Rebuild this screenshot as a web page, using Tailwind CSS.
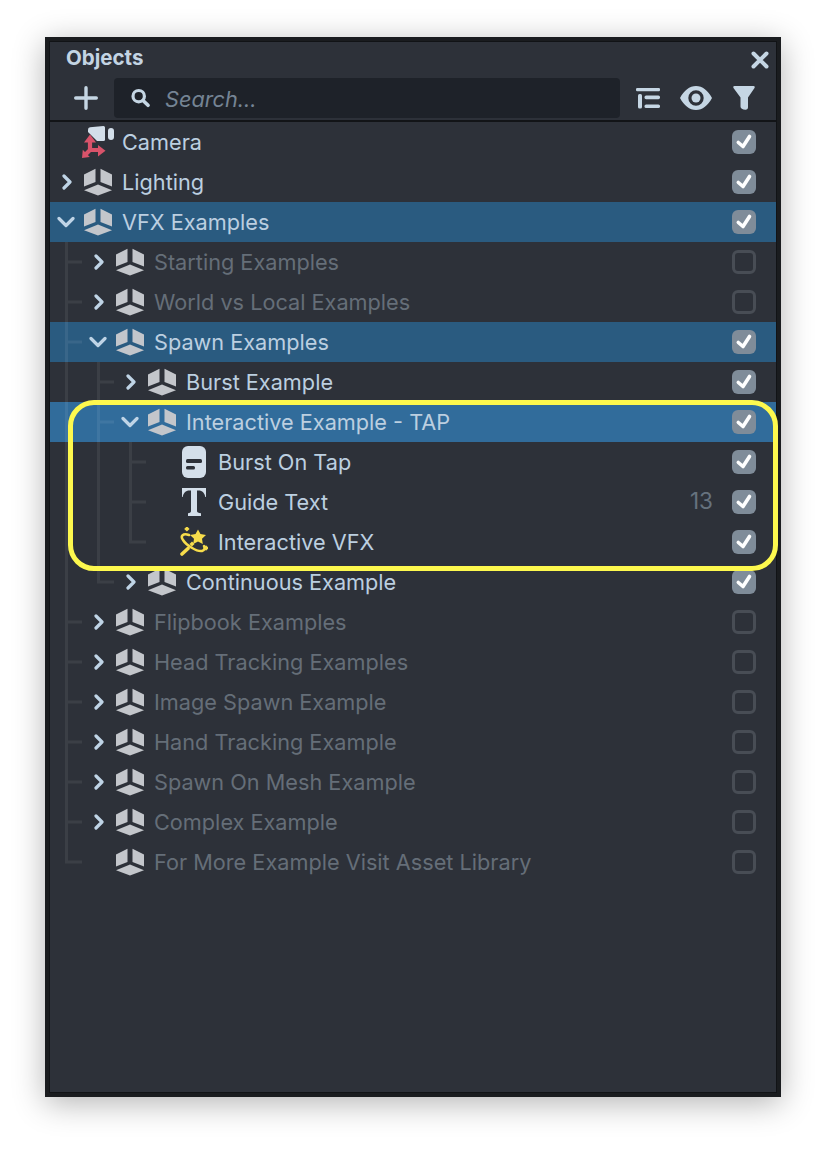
<!DOCTYPE html>
<html lang="en">
<head>
<meta charset="utf-8">
<title>Objects</title>
<script src="https://cdn.jsdelivr.net/npm/@tailwindcss/browser@4"></script>
</head>
<body class="bg-white font-['Inter',sans-serif] h-[1150px] pt-[37px] pl-[45px]">
<svg width="0" height="0" class="absolute">
  <defs>
    <symbol id="box" viewBox="0 0 28 27"><path d="M11.500 0.300V13.500L0 18V6Z" /><path d="M16.500 0.300V13.500L28 18V6Z" /><path d="M14 16L28 21.800L14 27L0 21.800Z" /></symbol>
    <symbol id="cr" viewBox="0 0 18 16"><path d="M6 2L12 8L6 14" fill="none" stroke="currentColor" stroke-width="3.200" stroke-linecap="round" stroke-linejoin="round"/></symbol>
    <symbol id="cd" viewBox="0 0 18 12"><path d="M2 2.500L9 9.500L16 2.500" fill="none" stroke="currentColor" stroke-width="3.200" stroke-linecap="round" stroke-linejoin="round"/></symbol>
    <symbol id="chk" viewBox="0 0 24 24"><path d="M6.300 12.500L11 16.500L17.500 6.500" fill="none" stroke="#fff" stroke-width="3.600" stroke-linecap="round" stroke-linejoin="round"/></symbol>
  </defs>
</svg>

<div class="relative w-[736px] h-[1060px] border-[5px] border-[#1a1c1f] bg-[#2d3139] outline outline-1 outline-[#111316] -outline-offset-[5px] shadow-[0_6px_30px_rgba(0,0,0,0.3)]">

  <!-- header -->
  <div class="h-[80px] border-b-2 border-[#121417] flex flex-col">
    <div class="h-[36px] flex items-center justify-between pl-4 pr-[7px]">
      <span class="text-[20.500px] font-bold text-[#c3d4e3] leading-none mt-[-4px]">Objects</span>
      <svg class="w-[18px] h-[18px] text-[#c5d6e4]" viewBox="0 0 18 18"><path d="M2.500 2.500L15.500 15.500M15.500 2.500L2.500 15.500" stroke="currentColor" stroke-width="4" stroke-linecap="round"/></svg>
    </div>
    <div class="flex items-center pl-[24px]">
      <svg class="w-6 h-6 shrink-0" viewBox="0 0 24 24"><path d="M12 1.700V22.300M1.700 12H22.300" stroke="#c5d6e4" stroke-width="3.400" stroke-linecap="round"/></svg>
      <div class="ml-4 w-[506px] h-10 rounded-[4px] bg-[#1e2229] flex items-center pl-4">
        <svg class="w-5 h-5 shrink-0" viewBox="0 0 20 20"><circle cx="8.700" cy="8.200" r="5.700" fill="none" stroke="#c5d6e4" stroke-width="3.200"/><path d="M13 12.500L18 17.300" stroke="#c5d6e4" stroke-width="3.600" stroke-linecap="round"/></svg>
        <span class="ml-[15px] italic text-[21.700px] leading-none text-[#758494] mt-[3px]">Search...</span>
      </div>
      <svg class="ml-4 w-6 h-[21px] shrink-0" viewBox="0 0 24 21"><g fill="#c5d6e4"><rect x="0" y="0" width="24" height="3.200" rx="1.200"/><rect x="2" y="6" width="4" height="14.600" rx="1.600"/><rect x="8.500" y="7.600" width="15.500" height="3.600" rx="1.600"/><rect x="8.500" y="16.400" width="15.500" height="3.600" rx="1.600"/></g></svg>
      <svg class="ml-5 w-8 h-6 shrink-0" viewBox="0 0 32 24"><path fill-rule="evenodd" fill="#c5d6e4" d="M0 12C4 4.500 9.500 0 16 0S28 4.500 32 12C28 19.500 22.500 24 16 24S4 19.500 0 12ZM16 4.300A7.700 7.700 0 1 0 16 19.700A7.700 7.700 0 1 0 16 4.300Z"/><circle cx="16" cy="12" r="4.500" fill="#c5d6e4"/></svg>
      <svg class="ml-[21px] w-[22px] h-6 shrink-0" viewBox="0 0 22 24"><path fill="#c5d6e4" d="M1.500 0H20.500Q22.300 0 21.500 2L15 11.500V21.500Q15 23.500 13 23.800Q10.500 24 8.800 22.800Q7.500 22 7.500 20.500V11.500L0.500 2Q-0.300 0 1.500 0Z"/></svg>
    </div>
  </div>

  <!-- tree -->
  <div class="relative">
    <div class="flex h-10 items-center pl-2 pr-5 text-[#bccfe0]">
      <span class="w-[18px]"></span>
      <svg class="ml-[6px] mr-[-3px] w-[35px] h-[34px] shrink-0" viewBox="0 0 35 34">
        <path d="M6 7V4.500Q6 2.500 8 2.300L21.500 1Q23 1 23 2.500V14.500Q23 16 21.500 16H15Z" fill="#d3dfea"/><rect x="26" y="3" width="6" height="12" rx="3" fill="#d3dfea"/>
        <path d="M8 15V25M8 25L3 30M8 25H18" stroke="#d8536a" stroke-width="4.200" fill="none"/><path d="M8 9.500L14 17.500H2Z" fill="#d8536a"/><path d="M23.500 25.700L16 31.500V20Z" fill="#d8536a"/><path d="M0 33L0.800 24.800L7.800 32Z" fill="#d8536a"/>
      </svg>
      <span class="ml-[8px] mt-[2px] text-[21.700px] leading-none">Camera</span>
      <span class="ml-auto w-6 h-6 rounded-[6px] bg-[#7f8c99]"><svg class="w-6 h-6"><use href="#chk"/></svg></span>
    </div>
    <div class="flex h-10 items-center pl-2 pr-5 text-[#bccfe0]">
      <svg class="w-[18px] h-4 text-[#bfd4e6]"><use href="#cr"/></svg>
      <svg class="ml-[8px] w-[28px] h-[28px] fill-[#c3c6cb]"><use href="#box"/></svg>
      <span class="ml-[10px] mt-[2px] text-[21.700px] leading-none">Lighting</span>
      <span class="ml-auto w-6 h-6 rounded-[6px] bg-[#7f8c99]"><svg class="w-6 h-6"><use href="#chk"/></svg></span>
    </div>
    <div class="flex h-10 items-center pl-2 pr-5 text-[#bccfe0] bg-[#2a5b80]">
      <svg class="w-[18px] h-3 -ml-[1px] text-[#bfd4e6]"><use href="#cd"/></svg>
      <svg class="ml-[9px] w-[28px] h-[28px] fill-[#c3c6cb]"><use href="#box"/></svg>
      <span class="ml-[10px] mt-[2px] text-[21.700px] leading-none">VFX Examples</span>
      <span class="ml-auto w-6 h-6 rounded-[6px] bg-[#7f8c99]"><svg class="w-6 h-6"><use href="#chk"/></svg></span>
    </div>
    <div class="flex h-10 items-center pl-10 pr-5 text-[#656e78]">
      <svg class="w-[18px] h-4 text-[#bfd4e6]"><use href="#cr"/></svg>
      <svg class="ml-[8px] w-[28px] h-[28px] fill-[#c3c6cb]"><use href="#box"/></svg>
      <span class="ml-[10px] mt-[2px] text-[21.700px] leading-none">Starting Examples</span>
      <span class="ml-auto w-6 h-6 rounded-[6px] border-[3px] border-[#484d55]"></span>
    </div>
    <div class="flex h-10 items-center pl-10 pr-5 text-[#656e78]">
      <svg class="w-[18px] h-4 text-[#bfd4e6]"><use href="#cr"/></svg>
      <svg class="ml-[8px] w-[28px] h-[28px] fill-[#c3c6cb]"><use href="#box"/></svg>
      <span class="ml-[10px] mt-[2px] text-[21.700px] leading-none">World vs Local Examples</span>
      <span class="ml-auto w-6 h-6 rounded-[6px] border-[3px] border-[#484d55]"></span>
    </div>
    <div class="flex h-10 items-center pl-10 pr-5 text-[#bccfe0] bg-[#2a5b80]">
      <svg class="w-[18px] h-3 -ml-[1px] text-[#bfd4e6]"><use href="#cd"/></svg>
      <svg class="ml-[9px] w-[28px] h-[28px] fill-[#c3c6cb]"><use href="#box"/></svg>
      <span class="ml-[10px] mt-[2px] text-[21.700px] leading-none">Spawn Examples</span>
      <span class="ml-auto w-6 h-6 rounded-[6px] bg-[#7f8c99]"><svg class="w-6 h-6"><use href="#chk"/></svg></span>
    </div>
    <div class="flex h-10 items-center pl-[72px] pr-5 text-[#bccfe0]">
      <svg class="w-[18px] h-4 text-[#bfd4e6]"><use href="#cr"/></svg>
      <svg class="ml-[8px] w-[28px] h-[28px] fill-[#c3c6cb]"><use href="#box"/></svg>
      <span class="ml-[10px] mt-[2px] text-[21.700px] leading-none">Burst Example</span>
      <span class="ml-auto w-6 h-6 rounded-[6px] bg-[#7f8c99]"><svg class="w-6 h-6"><use href="#chk"/></svg></span>
    </div>
    <div class="flex h-10 items-center pl-[72px] pr-5 text-[#bccfe0] bg-[#316c9b]">
      <svg class="w-[18px] h-3 -ml-[1px] text-[#bfd4e6]"><use href="#cd"/></svg>
      <svg class="ml-[9px] w-[28px] h-[28px] fill-[#c3c6cb]"><use href="#box"/></svg>
      <span class="ml-[10px] mt-[2px] text-[21.700px] leading-none">Interactive Example - TAP</span>
      <span class="ml-auto w-6 h-6 rounded-[6px] bg-[#7f8c99]"><svg class="w-6 h-6"><use href="#chk"/></svg></span>
    </div>
    <div class="flex h-10 items-center pl-[132px] pr-5 text-[#bccfe0]">
      <svg class="w-6 h-8 shrink-0" viewBox="0 0 24 32"><rect width="24" height="32" rx="6" fill="#d4dfea"/><rect x="4" y="13" width="16" height="4" rx="1.500" fill="#2d3139"/><rect x="4" y="20" width="9" height="3.500" rx="1.500" fill="#2d3139"/></svg>
      <span class="ml-3 mt-[2px] text-[21.700px] leading-none">Burst On Tap</span>
      <span class="ml-auto w-6 h-6 rounded-[6px] bg-[#7f8c99]"><svg class="w-6 h-6"><use href="#chk"/></svg></span>
    </div>
    <div class="flex h-10 items-center pl-[132px] pr-5 text-[#bccfe0]">
      <svg class="w-6 h-7 shrink-0" viewBox="0 0 24 28"><path fill="#d4dfea" d="M0 0H24V9H23.300C22.500 5 20.500 2.500 16.500 2.500H15V23Q15 25 19 25.200V28H6V25.200Q9 25 9 23V2.500H7.500C3.500 2.500 1.500 5 0.700 9H0Z"/></svg>
      <span class="ml-3 mt-[2px] text-[21.700px] leading-none">Guide Text</span>
      <span class="ml-auto mt-[-1px] text-[22.500px] leading-none text-[#66727e]">13</span>
      <span class="ml-[19px] w-6 h-6 rounded-[6px] bg-[#7f8c99]"><svg class="w-6 h-6"><use href="#chk"/></svg></span>
    </div>
    <div class="flex h-10 items-center pl-[130px] pr-5 text-[#bccfe0]">
      <svg class="w-[28px] h-[30px] shrink-0 -mr-[2px]" viewBox="0 0 28 30"><g fill="#f6dc4b"><path d="M18 2.500L20.500 7L26 8L22 11.800L22.800 17L18 14.500L13.200 17L14 11.800L10 8L15.500 7Z"/><rect x="5" y="0" width="3.800" height="3.800" transform="rotate(45 6.900 1.900)"/><rect x="10.200" y="15.200" width="3.600" height="3.600" transform="rotate(45 12 17)"/><rect x="24" y="19" width="4" height="4" transform="rotate(45 26 21)"/></g><path d="M9 8C3 6 0 9 3 13C6 18 17 25 22 24C25 23 25 21 24 19" fill="none" stroke="#f6dc4b" stroke-width="2.500" stroke-linecap="round"/><path d="M2 27L8 21.500" stroke="#f6dc4b" stroke-width="3.600" stroke-linecap="round"/></svg>
      <span class="ml-3 mt-[2px] text-[21.700px] leading-none">Interactive VFX</span>
      <span class="ml-auto w-6 h-6 rounded-[6px] bg-[#7f8c99]"><svg class="w-6 h-6"><use href="#chk"/></svg></span>
    </div>
    <div class="flex h-10 items-center pl-[72px] pr-5 text-[#bccfe0]">
      <svg class="w-[18px] h-4 text-[#bfd4e6]"><use href="#cr"/></svg>
      <svg class="ml-[8px] w-[28px] h-[28px] fill-[#c3c6cb]"><use href="#box"/></svg>
      <span class="ml-[10px] mt-[2px] text-[21.700px] leading-none">Continuous Example</span>
      <span class="ml-auto w-6 h-6 rounded-[6px] bg-[#7f8c99]"><svg class="w-6 h-6"><use href="#chk"/></svg></span>
    </div>
    <div class="flex h-10 items-center pl-10 pr-5 text-[#656e78]">
      <svg class="w-[18px] h-4 text-[#bfd4e6]"><use href="#cr"/></svg>
      <svg class="ml-[8px] w-[28px] h-[28px] fill-[#c3c6cb]"><use href="#box"/></svg>
      <span class="ml-[10px] mt-[2px] text-[21.700px] leading-none">Flipbook Examples</span>
      <span class="ml-auto w-6 h-6 rounded-[6px] border-[3px] border-[#484d55]"></span>
    </div>
    <div class="flex h-10 items-center pl-10 pr-5 text-[#656e78]">
      <svg class="w-[18px] h-4 text-[#bfd4e6]"><use href="#cr"/></svg>
      <svg class="ml-[8px] w-[28px] h-[28px] fill-[#c3c6cb]"><use href="#box"/></svg>
      <span class="ml-[10px] mt-[2px] text-[21.700px] leading-none">Head Tracking Examples</span>
      <span class="ml-auto w-6 h-6 rounded-[6px] border-[3px] border-[#484d55]"></span>
    </div>
    <div class="flex h-10 items-center pl-10 pr-5 text-[#656e78]">
      <svg class="w-[18px] h-4 text-[#bfd4e6]"><use href="#cr"/></svg>
      <svg class="ml-[8px] w-[28px] h-[28px] fill-[#c3c6cb]"><use href="#box"/></svg>
      <span class="ml-[10px] mt-[2px] text-[21.700px] leading-none">Image Spawn Example</span>
      <span class="ml-auto w-6 h-6 rounded-[6px] border-[3px] border-[#484d55]"></span>
    </div>
    <div class="flex h-10 items-center pl-10 pr-5 text-[#656e78]">
      <svg class="w-[18px] h-4 text-[#bfd4e6]"><use href="#cr"/></svg>
      <svg class="ml-[8px] w-[28px] h-[28px] fill-[#c3c6cb]"><use href="#box"/></svg>
      <span class="ml-[10px] mt-[2px] text-[21.700px] leading-none">Hand Tracking Example</span>
      <span class="ml-auto w-6 h-6 rounded-[6px] border-[3px] border-[#484d55]"></span>
    </div>
    <div class="flex h-10 items-center pl-10 pr-5 text-[#656e78]">
      <svg class="w-[18px] h-4 text-[#bfd4e6]"><use href="#cr"/></svg>
      <svg class="ml-[8px] w-[28px] h-[28px] fill-[#c3c6cb]"><use href="#box"/></svg>
      <span class="ml-[10px] mt-[2px] text-[21.700px] leading-none">Spawn On Mesh Example</span>
      <span class="ml-auto w-6 h-6 rounded-[6px] border-[3px] border-[#484d55]"></span>
    </div>
    <div class="flex h-10 items-center pl-10 pr-5 text-[#656e78]">
      <svg class="w-[18px] h-4 text-[#bfd4e6]"><use href="#cr"/></svg>
      <svg class="ml-[8px] w-[28px] h-[28px] fill-[#c3c6cb]"><use href="#box"/></svg>
      <span class="ml-[10px] mt-[2px] text-[21.700px] leading-none">Complex Example</span>
      <span class="ml-auto w-6 h-6 rounded-[6px] border-[3px] border-[#484d55]"></span>
    </div>
    <div class="flex h-10 items-center pl-10 pr-5 text-[#656e78]">
      <span class="w-[18px]"></span>
      <svg class="ml-[8px] w-[28px] h-[28px] fill-[#c3c6cb]"><use href="#box"/></svg>
      <span class="ml-[10px] mt-[2px] text-[21.700px] leading-none">For More Example Visit Asset Library</span>
      <span class="ml-auto w-6 h-6 rounded-[6px] border-[3px] border-[#484d55]"></span>
    </div>

    <!-- tree guides over the rows: origin is tree top (page x 50, y 122) -->
    <svg class="absolute left-0 top-0 pointer-events-none" width="726" height="800" viewBox="0 0 726 800">
      <g stroke="#fff" stroke-opacity="0.07" stroke-width="3" fill="none">
        <path d="M16.500 120V740H32"/>
        <path d="M18 140H32M18 180H32M18 220H32M18 500H32M18 540H32M18 580H32M18 620H32M18 660H32M18 700H32"/>
        <path d="M48.500 240V460H64"/>
        <path d="M50 260H64M50 300H64"/>
        <path d="M80.500 320V420H96"/>
        <path d="M82 340H96M82 380H96"/>
      </g>
    </svg>
  </div>

  <!-- highlight annotation -->
  <div class="absolute left-[18px] top-[358px] w-[710px] h-[171px] rounded-[26px] border-[5px] border-[#fdf84e] pointer-events-none"></div>
</div>
</body>
</html>
